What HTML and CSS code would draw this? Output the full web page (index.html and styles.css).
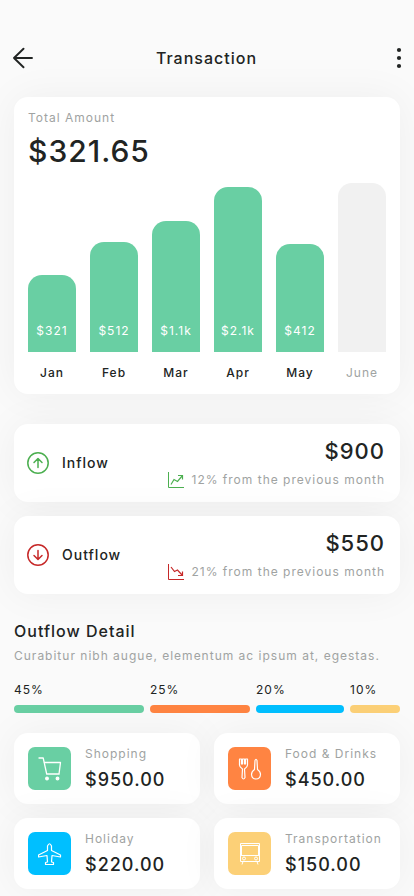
FILE: index.html
```html
<!DOCTYPE html>
<html lang="en">
<head>
<meta charset="utf-8">
<meta name="viewport" content="width=device-width, initial-scale=1">
<title>Transaction</title>
<link rel="stylesheet" href="styles.css">
</head>
<body>
<header class="topbar">
  <button class="icon-button" type="button" aria-label="Back">
    <svg width="20" height="22" viewBox="0 0 20 22" fill="none" stroke="currentColor" stroke-width="1.9" stroke-linecap="round" stroke-linejoin="round"><path d="M19 11H1M10.500 1.700L1 11l9.500 9.300"/></svg>
  </button>
  <h1 class="title">Transaction</h1>
  <button class="icon-button" type="button" aria-label="More options">
    <svg width="6" height="22" viewBox="0 0 6 22" fill="currentColor"><circle cx="3" cy="3" r="2.100"/><circle cx="3" cy="11" r="2.100"/><circle cx="3" cy="19" r="2.100"/></svg>
  </button>
</header>
<main class="content">
  <section class="card total">
    <p class="label">Total Amount</p>
    <p class="total-amount">$321.65</p>
    <ul class="chart">
      <li class="month"><div class="bar" style="height:77px">$321</div><span>Jan</span></li>
      <li class="month"><div class="bar" style="height:110px">$512</div><span>Feb</span></li>
      <li class="month"><div class="bar" style="height:131px">$1.1k</div><span>Mar</span></li>
      <li class="month"><div class="bar" style="height:165px">$2.1k</div><span>Apr</span></li>
      <li class="month"><div class="bar" style="height:108px">$412</div><span>May</span></li>
      <li class="month upcoming"><div class="bar" style="height:169px"></div><span>June</span></li>
    </ul>
  </section>

  <section class="flows">
    <article class="card flow inflow">
      <svg class="flow-icon" width="22" height="22" viewBox="0 0 22 22" fill="none" stroke="currentColor" stroke-width="1.500" stroke-linecap="round" stroke-linejoin="round"><circle cx="11" cy="11" r="10.200"/><path d="M11 15.500V7M7 10.500l4-4 4 4"/></svg>
      <h2 class="flow-name">Inflow</h2>
      <div class="flow-data">
        <p class="flow-amount">$900</p>
        <p class="label trend"><svg width="16" height="16" viewBox="0 0 16 16" fill="none" stroke="currentColor"><path d="M.5 0v15.500H16"/><path stroke-width="1.200" d="M3 12.500l3-5 3.500 2L14.500 3.500M10 3.500h4.500v4"/></svg>12% from the previous month</p>
      </div>
    </article>
    <article class="card flow outflow">
      <svg class="flow-icon" width="22" height="22" viewBox="0 0 22 22" fill="none" stroke="currentColor" stroke-width="1.500" stroke-linecap="round" stroke-linejoin="round"><circle cx="11" cy="11" r="10.200"/><path d="M11 6.500V15M7 11.500l4 4 4-4"/></svg>
      <h2 class="flow-name">Outflow</h2>
      <div class="flow-data">
        <p class="flow-amount">$550</p>
        <p class="label trend"><svg width="16" height="16" viewBox="0 0 16 16" fill="none" stroke="currentColor"><path d="M.5 0v15.500H16"/><path stroke-width="1.200" d="M3 3l3.500 4.500 3-1.500L14.500 11.500M10 11.500h4.500v-4"/></svg>21% from the previous month</p>
      </div>
    </article>
  </section>

  <section class="detail">
    <h2 class="title">Outflow Detail</h2>
    <p class="label">Curabitur nibh augue, elementum ac ipsum at, egestas.</p>
    <ul class="split">
      <li class="green" style="flex-grow:130">45%</li>
      <li class="orange" style="flex-grow:100">25%</li>
      <li class="blue" style="flex-grow:88">20%</li>
      <li class="yellow" style="flex-grow:50">10%</li>
    </ul>
  </section>

  <section class="categories">
    <article class="card category green">
      <div class="tile"><svg width="24" height="24" viewBox="0 0 24 24" fill="none" stroke="currentColor" stroke-width="1.300" stroke-linejoin="round" stroke-linecap="round"><path d="M1 1h4.200L8.700 17h12.500M6 5.500h16.500L21 17"/><circle cx="9" cy="21.500" r="1.300" fill="currentColor"/><circle cx="19.500" cy="21.500" r="1.300" fill="currentColor"/></svg></div>
      <div><h3 class="label">Shopping</h3><p class="amount">$950.00</p></div>
    </article>
    <article class="card category orange">
      <div class="tile"><svg width="24" height="24" viewBox="0 0 24 24" fill="none" stroke="currentColor" stroke-width="1.200" stroke-linejoin="round"><path d="M1.500 2v6q0 2 3 4L4 20.500q1.500 3 3 0L6.500 12q3-2 3-4V2h-2v5h-1V2h-2v5h-1V2zM16.500 12.500l.5-9q1-2.500 2 0l.5 9q3 2 3 5c-.5 6-8.500 6-9 0q0-3 3-5z"/></svg></div>
      <div><h3 class="label">Food &amp; Drinks</h3><p class="amount">$450.00</p></div>
    </article>
    <article class="card category blue">
      <div class="tile"><svg width="24" height="24" viewBox="0 0 24 24" fill="none" stroke="currentColor" stroke-width="1.200" stroke-linejoin="round"><path d="M9.500 8.500V4q2-4.500 4 0v4.500l9 4.500v2l-8.500-1.500-.5 6.500 2 .5v2h-8v-2l2-.5-.5-6.500L.5 15v-2z"/></svg></div>
      <div><h3 class="label">Holiday</h3><p class="amount">$220.00</p></div>
    </article>
    <article class="card category yellow">
      <div class="tile"><svg width="24" height="24" viewBox="0 0 24 24" fill="none" stroke="currentColor"><path d="M2.500 1.500h19v18h-19zM2.500 13.500h19M3.500 3.500h17M3.500 3.500v10M20.500 3.500v10M5 19.500l-1 3M19 19.500l1 3"/><circle cx="6" cy="16.500" r="1.500"/><circle cx="18" cy="16.500" r="1.500"/></svg></div>
      <div><h3 class="label">Transportation</h3><p class="amount">$150.00</p></div>
    </article>
  </section>
</main>
</body>
</html>
```
FILE: styles.css
```css
* { box-sizing: border-box; }

body {
  margin: 0;
  background: #fafafa;
  color: #212423;
  font-family: Inter, "Liberation Sans", sans-serif;
  font-size: 12px;
  line-height: 16px;
  letter-spacing: 1px;
}

h1, h2, h3, p, ul { margin: 0; padding: 0; font-size: inherit; font-weight: 400; }
ul { list-style: none; }
svg { display: block; flex: none; }

.topbar {
  display: flex;
  align-items: center;
  justify-content: space-between;
  padding: 46px 12px 0 13px;
}

.icon-button {
  display: flex;
  align-items: center;
  width: 22px;
  height: 24px;
  padding: 0;
  border: 0;
  background: none;
  color: inherit;
}
.icon-button:last-child { width: 24px; justify-content: flex-end; }

.title { font-size: 16px; line-height: 20px; font-weight: 500; }

.content { padding: 27px 14px 7px; }

.card {
  border-radius: 14px;
  background: #fff;
  box-shadow: 0 0 40px rgba(0, 0, 0, 0.05);
}

.label { color: #a0a3a2; }

.total { padding: 13px 14px; }
.total-amount { font-size: 30px; line-height: 36px; font-weight: 500; margin-top: 7px; }

.chart {
  display: grid;
  grid-template-columns: repeat(6, 1fr);
  align-items: end;
  gap: 14px;
  margin-top: 14px;
}
.month { text-align: center; font-weight: 500; }
.bar {
  display: flex;
  align-items: flex-end;
  justify-content: center;
  margin-bottom: 13px;
  padding-bottom: 13px;
  border-radius: 14px 14px 0 0;
  background: #69cfa3;
  color: #fff;
  font-weight: 400;
}
.upcoming { color: #a0a3a2; font-weight: 400; }
.upcoming .bar { background: #f1f1f1; }

.flows { display: grid; gap: 14px; margin-top: 30px; }
.flow { display: flex; align-items: center; padding: 14px 15px 14px 13px; }
.inflow svg { color: #4caf50; }
.outflow svg { color: #c62828; }
.flow-name { margin-left: 13px; font-size: 14px; font-weight: 500; }
.flow-data { margin-left: auto; text-align: right; }
.flow-amount { font-size: 22px; line-height: 26px; font-weight: 500; }
.trend { display: flex; align-items: center; gap: 8px; margin-top: 8px; }

.detail { margin-top: 27px; }
.detail .label { margin-top: 7px; }
.split { display: flex; gap: 6px; margin-top: 18px; }
.split li { flex: 1 1 0; }
.split li::after {
  content: "";
  display: block;
  height: 8px;
  margin-top: 7px;
  border-radius: 4px;
  background: var(--tint);
}

.green { --tint: #69cfa3; }
.orange { --tint: #ff8442; }
.blue { --tint: #00bfff; }
.yellow { --tint: #fcd077; }

.categories {
  display: grid;
  grid-template-columns: repeat(2, minmax(0, 1fr));
  gap: 14px;
  margin-top: 20px;
}
.category { display: flex; align-items: center; gap: 14px; padding: 13px 14px; }
.tile {
  display: grid;
  place-items: center;
  flex: none;
  width: 43px;
  height: 43px;
  border-radius: 7px;
  background: var(--tint);
  color: #fff;
}
.amount { margin-top: 6px; font-size: 18px; line-height: 23px; font-weight: 500; }
```
